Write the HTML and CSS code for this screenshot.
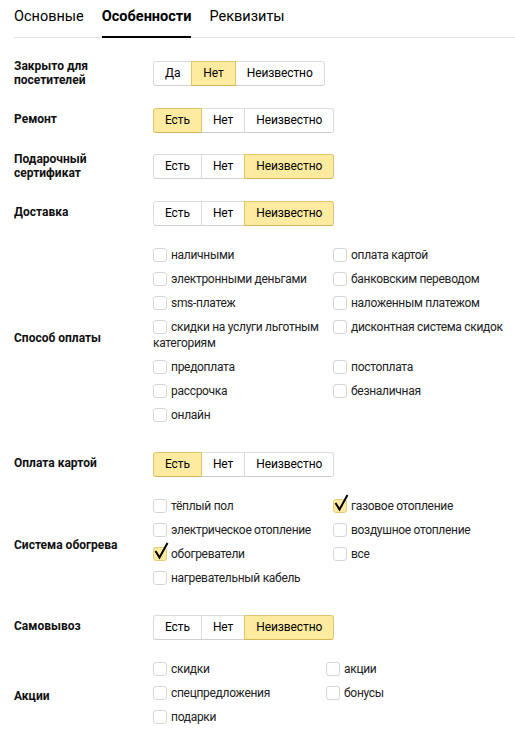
FILE: index.html
```html
<!DOCTYPE html>
<html lang="ru">
<head>
<meta charset="utf-8">
<title>Особенности</title>
<link rel="stylesheet" href="styles.css">
</head>
<body>
<div class="page">
  <nav class="tabs">
    <span class="tab">Основные</span>
    <span class="tab tab-active">Особенности</span>
    <span class="tab">Реквизиты</span>
  </nav>

  <div class="form">
    <div class="row">
      <div class="label">Закрыто для<br>посетителей</div>
      <div class="seg">
        <span class="seg-item">Да</span><span class="seg-item is-on">Нет</span><span class="seg-item">Неизвестно</span>
      </div>
    </div>

    <div class="row">
      <div class="label">Ремонт</div>
      <div class="seg">
        <span class="seg-item is-on">Есть</span><span class="seg-item">Нет</span><span class="seg-item">Неизвестно</span>
      </div>
    </div>

    <div class="row">
      <div class="label">Подарочный<br>сертификат</div>
      <div class="seg">
        <span class="seg-item">Есть</span><span class="seg-item">Нет</span><span class="seg-item is-on">Неизвестно</span>
      </div>
    </div>

    <div class="row">
      <div class="label">Доставка</div>
      <div class="seg">
        <span class="seg-item">Есть</span><span class="seg-item">Нет</span><span class="seg-item is-on">Неизвестно</span>
      </div>
    </div>

    <div class="row">
      <div class="label">Способ оплаты</div>
      <div class="checks">
        <div class="check"><span class="box"></span>наличными</div>
        <div class="check"><span class="box"></span>оплата картой</div>
        <div class="check"><span class="box"></span>электронными деньгами</div>
        <div class="check"><span class="box"></span>банковским переводом</div>
        <div class="check"><span class="box"></span>sms-платеж</div>
        <div class="check"><span class="box"></span>наложенным платежом</div>
        <div class="check"><span class="box"></span>скидки на услуги льготным категориям</div>
        <div class="check"><span class="box"></span>дисконтная система скидок</div>
        <div class="check"><span class="box"></span>предоплата</div>
        <div class="check"><span class="box"></span>постоплата</div>
        <div class="check"><span class="box"></span>рассрочка</div>
        <div class="check"><span class="box"></span>безналичная</div>
        <div class="check"><span class="box"></span>онлайн</div>
      </div>
    </div>

    <div class="row">
      <div class="label">Оплата картой</div>
      <div class="seg">
        <span class="seg-item is-on">Есть</span><span class="seg-item">Нет</span><span class="seg-item">Неизвестно</span>
      </div>
    </div>

    <div class="row">
      <div class="label">Система обогрева</div>
      <div class="checks">
        <div class="check"><span class="box"></span>тёплый пол</div>
        <div class="check"><span class="box box-on"><svg class="tick" viewBox="0 0 16 20" width="16" height="20"><polyline points="2.5,10 6.5,16.5 14.5,2" fill="none" stroke="#000" stroke-width="2"/></svg></span>газовое отопление</div>
        <div class="check"><span class="box"></span>электрическое отопление</div>
        <div class="check"><span class="box"></span>воздушное отопление</div>
        <div class="check"><span class="box box-on"><svg class="tick" viewBox="0 0 16 20" width="16" height="20"><polyline points="2.5,10 6.5,16.5 14.5,2" fill="none" stroke="#000" stroke-width="2"/></svg></span>обогреватели</div>
        <div class="check"><span class="box"></span>все</div>
        <div class="check"><span class="box"></span>нагревательный кабель</div>
      </div>
    </div>

    <div class="row">
      <div class="label">Самовывоз</div>
      <div class="seg">
        <span class="seg-item">Есть</span><span class="seg-item">Нет</span><span class="seg-item is-on">Неизвестно</span>
      </div>
    </div>

    <div class="row">
      <div class="label">Акции</div>
      <div class="checks checks-narrow">
        <div class="check"><span class="box"></span>скидки</div>
        <div class="check"><span class="box"></span>акции</div>
        <div class="check"><span class="box"></span>спецпредложения</div>
        <div class="check"><span class="box"></span>бонусы</div>
        <div class="check"><span class="box"></span>подарки</div>
      </div>
    </div>
  </div>
</div>
</body>
</html>
```

FILE: styles.css
```css
html, body {
  margin: 0;
  padding: 0;
  background: #fff;
}

body {
  font-family: Roboto, "Liberation Sans", sans-serif;
  color: #000;
}

.page {
  padding-left: 14px;
}

.tabs {
  display: flex;
  gap: 18px;
  border-bottom: 1px solid #e3e3e3;
  box-sizing: border-box;
  height: 38px;
}

.tab {
  font-size: 14.5px;
  line-height: 20px;
  padding-top: 7px;
  color: #000;
  box-sizing: border-box;
}

.tab-active {
  font-weight: 700;
  border-bottom: 2px solid #000;
  margin-bottom: -1px;
}

.form {
  display: flex;
  flex-direction: column;
  gap: 20.5px;
  padding-top: 22px;
}

.row {
  display: grid;
  grid-template-columns: 139px 1fr;
  align-items: center;
}

.label {
  font-size: 12px;
  line-height: 13.5px;
  font-weight: 700;
  color: #111;
}

.seg {
  display: flex;
  align-self: center;
}

.seg-item {
  font-size: 12px;
  letter-spacing: -0.1px;
  line-height: 23px;
  height: 23px;
  padding: 0 11px;
  border: 1px solid #dcdcdc;
  border-bottom-color: #cfcfcf;
  background: #fff;
  margin-left: -1px;
  color: #000;
}

.seg-item:first-child {
  margin-left: 0;
  border-radius: 3px 0 0 3px;
}

.seg-item:last-child {
  border-radius: 0 3px 3px 0;
}

.seg-item.is-on {
  background: #ffeba0;
  border-color: #dfc56e;
  border-bottom-color: #d2b55c;
  position: relative;
  z-index: 1;
}

.checks {
  display: grid;
  grid-template-columns: 180px 182px;
  row-gap: 8px;
  padding-top: 1px;
  padding-bottom: 8px;
  align-items: start;
}

.checks-narrow {
  grid-template-columns: 173px 120px;
}

.check {
  font-size: 12px;
  letter-spacing: -0.3px;
  line-height: 16px;
  color: #222;
}

.box {
  display: inline-block;
  box-sizing: border-box;
  width: 14px;
  height: 14px;
  border: 1px solid #d6d6d6;
  border-radius: 3px;
  vertical-align: -3px;
  margin-right: 4px;
  background: #fff;
  position: relative;
}

.box-on {
  background: #ffeba0;
  border-color: #e2ca7a;
}

.tick {
  position: absolute;
  left: -1px;
  top: -7px;
}
```
